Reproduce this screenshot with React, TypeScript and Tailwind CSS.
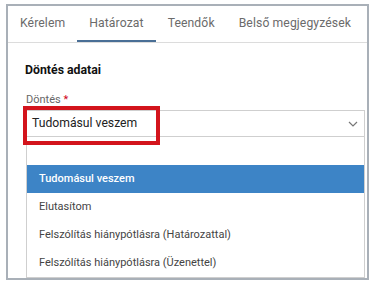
import React from 'react';

const tabs = ['Kérelem', 'Határozat', 'Teendők', 'Belső megjegyzések'];

const options = [
  'Tudomásul veszem',
  'Elutasítom',
  'Felszólítás hiánypótlásra (Határozattal)',
  'Felszólítás hiánypótlásra (Üzenettel)',
];

const App: React.FC = () => {
  const active = 'Határozat';
  const selected = 'Tudomásul veszem';

  return (
    <div className="relative w-[375px] h-[286px] bg-white pt-[4px] pl-[6px] font-['Roboto',sans-serif]">
      <div className="w-[363px] h-[276px] overflow-hidden border-2 border-[#a9b0b8] bg-white">
        {/* tabs */}
        <div className="flex border-b border-[#dcdcdc]">
          {tabs.map((t) => (
            <div
              key={t}
              className={`h-[36px] px-3 flex items-center whitespace-nowrap text-[12.2px] tracking-[0.1px] text-[#6b6b6b] border-b-2 ${
                t === active ? 'border-[#4a6f96]' : 'border-transparent'
              }`}
            >
              {t}
            </div>
          ))}
        </div>

        <div className="pl-[18px] pr-[2px]">
          <h2 className="pt-[19px] text-[12.3px] leading-[16px] font-bold text-[#111] -ml-px">Döntés adatai</h2>
          <div className="mt-[15px] text-[11px] leading-[14px] text-[#666]">
            Döntés <span className="text-[#d0021b]">*</span>
          </div>

          {/* select */}
          <div className="mt-[3px] h-[27px] border border-[#cfcfcf] flex items-center justify-between pl-[5px] pr-[5px]">
            <span className="text-[12.2px] text-[#222]">{selected}</span>
            <svg width="10" height="6" viewBox="0 0 10 6" fill="none" className="mr-[1px]">
              <path d="M1 1l4 4 4-4" stroke="#777" strokeWidth="1.2" />
            </svg>
          </div>

          {/* open list */}
          <div className="border-x border-b border-[#cfcfcf]">
            <div className="h-[28px]" />
            {options.map((o) => (
              <div
                key={o}
                className={`h-[28px] flex items-center px-[12px] text-[11px] ${
                  o === selected ? 'bg-[#3d84c6] text-white font-medium' : 'text-[#444]'
                }`}
              >
                {o}
              </div>
            ))}
          </div>
        </div>
      </div>

      {/* annotation box */}
      <div className="absolute left-[23px] top-[106px] w-[137px] h-[39px] border-4 border-[#d3141c]" />
    </div>
  );
};

export default App;
